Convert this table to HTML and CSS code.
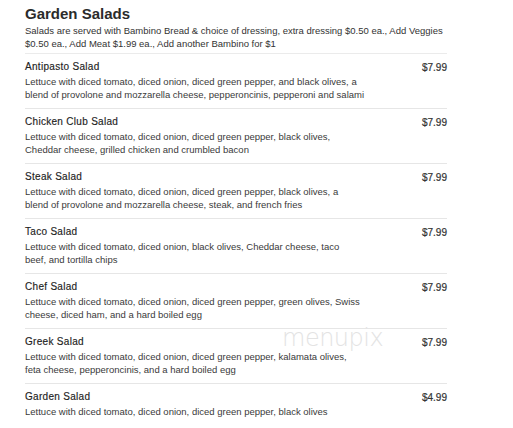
FILE: index.html
```html
<!DOCTYPE html>
<html lang="en">
<head>
    <meta charset="UTF-8">
    <meta name="viewport" content="width=device-width, initial-scale=1.0">
    <title>Garden Salads</title>
    <link rel="stylesheet" href="styles.css">
</head>
<body>
    <div class="menu">
        <h1>Garden Salads</h1>
        <p class="intro">Salads are served with Bambino Bread &amp; choice of dressing, extra dressing $0.50 ea., Add Veggies $0.50 ea., Add Meat $1.99 ea., Add another Bambino for $1</p>

        <div class="item">
            <div class="item-info">
                <div class="item-name">Antipasto Salad</div>
                <div class="item-desc">Lettuce with diced tomato, diced onion, diced green pepper, and black olives, a<br>blend of provolone and mozzarella cheese, pepperoncinis, pepperoni and salami</div>
            </div>
            <div class="item-price">$7.99</div>
        </div>
        <div class="item">
            <div class="item-info">
                <div class="item-name">Chicken Club Salad</div>
                <div class="item-desc">Lettuce with diced tomato, diced onion, diced green pepper, black olives,<br>Cheddar cheese, grilled chicken and crumbled bacon</div>
            </div>
            <div class="item-price">$7.99</div>
        </div>
        <div class="item">
            <div class="item-info">
                <div class="item-name">Steak Salad</div>
                <div class="item-desc">Lettuce with diced tomato, diced onion, diced green pepper, black olives, a<br>blend of provolone and mozzarella cheese, steak, and french fries</div>
            </div>
            <div class="item-price">$7.99</div>
        </div>
        <div class="item">
            <div class="item-info">
                <div class="item-name">Taco Salad</div>
                <div class="item-desc">Lettuce with diced tomato, diced onion, black olives, Cheddar cheese, taco<br>beef, and tortilla chips</div>
            </div>
            <div class="item-price">$7.99</div>
        </div>
        <div class="item">
            <div class="item-info">
                <div class="item-name">Chef Salad</div>
                <div class="item-desc">Lettuce with diced tomato, diced onion, diced green pepper, green olives, Swiss<br>cheese, diced ham, and a hard boiled egg</div>
            </div>
            <div class="item-price">$7.99</div>
        </div>
        <div class="item">
            <div class="item-info">
                <div class="item-name">Greek Salad</div>
                <div class="item-desc">Lettuce with diced tomato, diced onion, diced green pepper, kalamata olives,<br>feta cheese, pepperoncinis, and a hard boiled egg</div>
            </div>
            <div class="item-price">$7.99</div>
        </div>
        <div class="item">
            <div class="item-info">
                <div class="item-name">Garden Salad</div>
                <div class="item-desc">Lettuce with diced tomato, diced onion, diced green pepper, black olives</div>
            </div>
            <div class="item-price">$4.99</div>
        </div>

        <div class="watermark">menupix</div>
    </div>
</body>
</html>
```

FILE: styles.css
```css
body {
    margin: 0;
    background: #ffffff;
    font-family: 'Liberation Sans', Arial, sans-serif;
    color: #333333;
}

.menu {
    position: relative;
    width: 422px;
    margin-left: 25px;
    padding-top: 5px;
}

h1 {
    margin: 0;
    font-size: 15px;
    font-weight: bold;
    color: #2b2b2b;
    line-height: 18px;
}

.intro {
    margin: 1px 0 0;
    font-size: 9.5px;
    line-height: 13px;
    padding-bottom: 3px;
    border-bottom: 1px solid #ebebeb;
}

.item {
    display: flex;
    justify-content: space-between;
    align-items: flex-start;
    border-bottom: 1px solid #e6e6e6;
    height: 55px;
    box-sizing: border-box;
    padding-top: 6px;
}

.item:last-of-type {
    border-bottom: none;
}

.item-info {
    width: 370px;
}

.item-name {
    font-size: 10px;
    line-height: 14px;
    margin-bottom: 1px;
    letter-spacing: 0.3px;
    color: #222222;
    -webkit-text-stroke: 0.15px #222222;
}

.item-desc {
    font-size: 9.5px;
    line-height: 13px;
    white-space: nowrap;
    color: #3a3a3a;
}

.item-price {
    font-size: 10px;
    line-height: 14px;
    padding-top: 1px;
    color: #333333;
    -webkit-text-stroke: 0.2px #333333;
}

.watermark {
    position: absolute;
    left: 257px;
    top: 325px;
    font-size: 24px;
    line-height: 26px;
    color: #e3e3e3;
    font-family: 'DejaVu Sans', sans-serif;
    font-weight: 200;
    letter-spacing: -0.5px;
}
```
